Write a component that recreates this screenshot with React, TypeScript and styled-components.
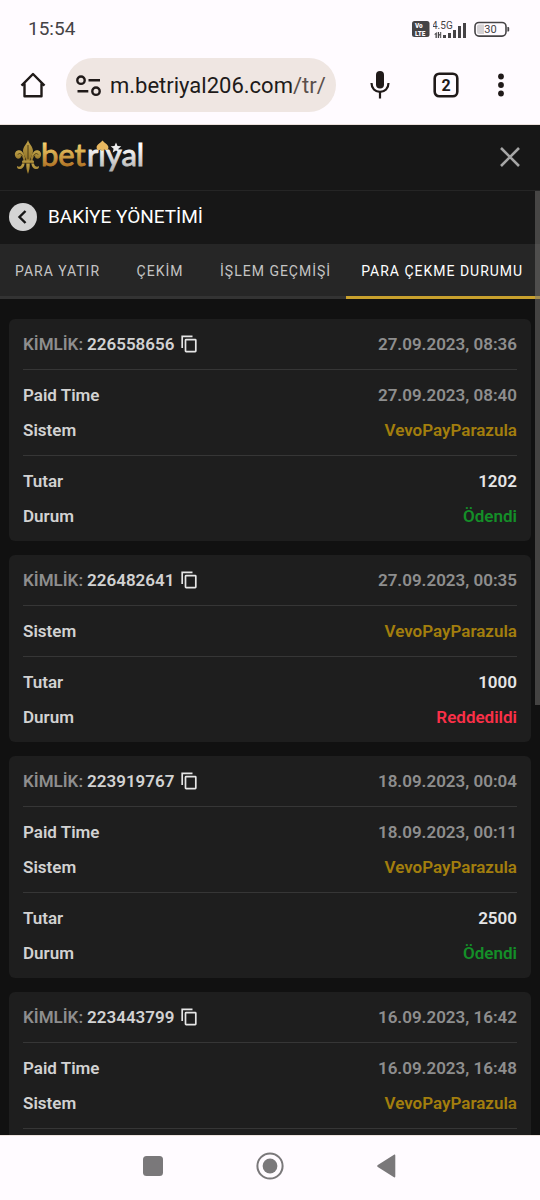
import React from "react";
import styled, { createGlobalStyle } from "styled-components";

const GlobalStyle = createGlobalStyle`
  *, *::before, *::after { box-sizing: border-box; }
  body {
    margin: 0;
    background: #111111;
    font-family: Roboto, "Liberation Sans", sans-serif;
  }
  button { font: inherit; color: inherit; border: 0; padding: 0; background: none; cursor: pointer; }
  svg { display: block; flex: none; }
`;

const Screen = styled.div`
  display: flex;
  flex-direction: column;
  height: 100vh;
  overflow: hidden;
`;

/* ---------- phone status bar ---------- */

const StatusBar = styled.div`
  display: flex;
  align-items: center;
  justify-content: space-between;
  flex: none;
  height: 58px;
  padding: 0 30px 0 28px;
  background: #fffbff;
  color: #454345;
`;

const Clock = styled.time`
  font-size: 19px;
  line-height: 24px;
`;

const StatusIcons = styled.div`
  display: flex;
  align-items: center;
  gap: 3px;
`;

/* ---------- browser toolbar ---------- */

const Toolbar = styled.div`
  display: flex;
  align-items: flex-start;
  flex: none;
  height: 67px;
  padding-right: 17px;
  background: #fffbff;
  border-bottom: 1px solid #ebe0dc;
  color: #201a19;
`;

const ToolButton = styled.button<{ $width: number }>`
  display: flex;
  align-items: center;
  justify-content: center;
  flex: none;
  width: ${(p) => p.$width}px;
  height: 54px;
`;

const AddressBar = styled.button`
  display: flex;
  align-items: center;
  gap: 8px;
  flex: 1;
  min-width: 0;
  height: 54px;
  margin-right: 11px;
  padding: 2px 8px 0 10px;
  overflow: hidden;
  border-radius: 27px;
  background: #efe6e2;
  white-space: nowrap;
`;

const Url = styled.span`
  font-size: 22px;
  line-height: 28px;
`;

const UrlPath = styled.span`
  color: #5b504c;
`;

/* ---------- site ---------- */

const SiteHeader = styled.header`
  display: flex;
  align-items: center;
  justify-content: space-between;
  flex: none;
  height: 66px;
  padding: 0 16px 2px 14px;
  background: #171717;
  border-bottom: 1px solid #252525;
`;

const HomeLink = styled.a`
  display: block;
`;

const CloseButton = styled.button`
  color: #a6a6a6;
`;

const Viewport = styled.div`
  position: relative;
  flex: 1;
  min-height: 0;
`;

const ScrollArea = styled.main`
  height: 100%;
  overflow-y: auto;
  scrollbar-width: none;
  background: #111111;
`;

const ScrollThumb = styled.div`
  position: absolute;
  top: 0;
  right: 0;
  width: 5px;
  height: 54.5%;
  background: rgba(120, 118, 116, 0.5);
`;

const TitleBar = styled.div`
  display: flex;
  align-items: center;
  gap: 11px;
  height: 53px;
  padding: 0 9px 2px;
  background: #171717;
`;

const BackButton = styled.button`
  display: flex;
  align-items: center;
  justify-content: center;
  width: 28px;
  height: 28px;
  border-radius: 50%;
  background: #d4d4d4;
  color: #171717;
`;

const Title = styled.h1`
  margin: 0;
  font-size: 19px;
  font-weight: 400;
  line-height: 24px;
  color: #ffffff;
`;

const Tabs = styled.nav`
  display: flex;
  height: 55px;
  background: #262626;
`;

const Tab = styled.button<{ $active?: boolean }>`
  flex: none;
  min-width: 90px;
  padding: 2px 15px 0;
  border-bottom: 3px solid ${(p) => (p.$active ? "#c9a12d" : "#333333")};
  color: ${(p) => (p.$active ? "#ffffff" : "#c4c4c4")};
  font-size: 14px;
  line-height: 20px;
  letter-spacing: 1px;
  white-space: nowrap;

  &:last-child { flex: 1 0 auto; text-align: left; }
`;

const CardList = styled.div`
  display: flex;
  flex-direction: column;
  gap: 14px;
  padding: 20px 9px;
`;

const Card = styled.article`
  padding: 0 14px;
  border-radius: 6px;
  background: #1e1e1e;
  font-size: 17px;
  font-weight: 600;
  line-height: 22px;
  color: #d2d2d2;
`;

const Section = styled.div`
  display: flex;
  flex-direction: column;
  gap: 13px;
  padding: 14px 0;

  & + & { border-top: 1px solid #363636; }
`;

const Row = styled.div`
  display: flex;
  align-items: center;
  justify-content: space-between;
  height: 22px;
`;

const Identity = styled.div`
  display: flex;
  align-items: center;
  gap: 4px;
`;

const Muted = styled.span`
  color: #8e8e8e;
`;

const CopyButton = styled.button`
  margin-left: 3px;
  color: #e6e6e6;
`;

type Tone = "muted" | "gold" | "plain" | "paid" | "rejected";

const toneColor: Record<Tone, string> = {
  muted: "#8e8e8e",
  gold: "#a37e0d",
  plain: "#e6e6e6",
  paid: "#148f28",
  rejected: "#fb3048",
};

const Value = styled.span<{ $tone: Tone }>`
  color: ${(p) => toneColor[p.$tone]};
`;

/* ---------- phone navigation ---------- */

const NavBar = styled.div`
  display: flex;
  justify-content: center;
  flex: none;
  height: 65px;
  padding-bottom: 4px;
  border-top: 1px solid #eee4e0;
  background: #fffbff;
  color: #7a787a;
`;

const NavButton = styled.button`
  display: flex;
  align-items: center;
  justify-content: center;
  width: 117px;
`;

/* ---------- drawings ---------- */

const VolteIcon = () => (
  <svg width="18" height="16" viewBox="0 0 18 16" aria-label="VoLTE">
    <rect width="17.5" height="16" rx="2.5" fill="#454345" />
    <text x="3" y="7" fontSize="6.4" fontWeight="900" fill="#fffbff">Vo</text>
    <text x="3" y="14.6" fontSize="6.4" fontWeight="900" fill="#fffbff">LTE</text>
  </svg>
);

const SignalIcon = () => (
  <svg width="38" height="19" viewBox="0 -2 38 19" aria-label="4.5G">
    <text x="-1" y="7" fontSize="10" fill="#454345">4.5G</text>
    <g fill="#454345">
      <path d="M3.8 10v6H2.500v-3.500H1zM4.800 10h1.300v2.200h1.500L6.100 14v2H4.800zM8.200 10h-1v6h1z" />
      <rect x="10" y="13" width="3" height="3" />
      <rect x="15" y="11" width="3" height="5" />
      <rect x="20" y="8" width="3" height="8" />
      <rect x="25" y="4" width="3" height="12" />
      <rect x="30" y="1" width="3" height="15" />
    </g>
  </svg>
);

const BatteryIcon = () => (
  <svg width="36" height="16" viewBox="0 0 36 16" aria-label="30%">
    <rect x="1" y="1.500" width="31" height="13.600" rx="4" fill="none" stroke="#454345" strokeWidth="1.600" />
    <path d="M5 3.500h5v9.600H5a2 2 0 0 1-2-2v-5.600a2 2 0 0 1 2-2z" fill="#d6d3d6" />
    <path d="M33.400 6h.8a1 1 0 0 1 1 1v2.600a1 1 0 0 1-1 1h-.8z" fill="#454345" />
    <text x="16.500" y="12.300" fontSize="11" textAnchor="middle" fill="#454345">30</text>
  </svg>
);

const HomeIcon = () => (
  <svg width="26" height="26" viewBox="0 0 26 26" fill="none" stroke="currentColor" strokeWidth="2.400" strokeLinejoin="round">
    <path d="M1.500 13.600 13 2l11.500 11.600M4.500 11.500V24.300h17V11.500" />
  </svg>
);

const SiteSettingsIcon = () => (
  <svg width="26" height="22" viewBox="0 0 26 22" fill="none" stroke="currentColor" strokeWidth="2.400">
    <circle cx="5" cy="5.200" r="3.700" />
    <path d="M12.500 5.200h11.500M1.500 16.200h10.800" />
    <circle cx="20" cy="16.200" r="3.700" />
  </svg>
);

const MicIcon = () => (
  <svg width="20" height="30" viewBox="0 0 20 30">
    <rect x="6" y="1" width="8" height="17.500" rx="4" fill="currentColor" />
    <path d="M1.500 13c0 5.400 3.700 8.800 8.500 8.800s8.500-3.400 8.500-8.800M10 21.800v6.700" fill="none" stroke="currentColor" strokeWidth="2.200" />
  </svg>
);

const TabCountIcon = () => (
  <svg width="26" height="26" viewBox="0 0 26 26">
    <rect x="1.700" y="1.700" width="22.600" height="22.600" rx="4.500" fill="none" stroke="currentColor" strokeWidth="2.600" />
    <text x="13" y="18.600" fontSize="16" fontWeight="700" textAnchor="middle" fill="currentColor">2</text>
  </svg>
);

const MenuIcon = () => (
  <svg width="8" height="24" viewBox="0 0 8 24" fill="currentColor">
    <circle cx="4" cy="3.500" r="2.900" />
    <circle cx="4" cy="12" r="2.900" />
    <circle cx="4" cy="20.500" r="2.900" />
  </svg>
);

const Logo = () => (
  <svg width="132" height="46" viewBox="0 -4 132 46" role="img" aria-label="betriyal">
    <defs>
      <linearGradient id="gold" x1="0" y1="0" x2="0" y2="1">
        <stop offset="0.2" stopColor="#f3d56f" />
        <stop offset="0.9" stopColor="#a9691d" />
      </linearGradient>
      <linearGradient id="silver" x1="0" y1="0" x2="0" y2="1">
        <stop offset="0.3" stopColor="#ffffff" />
        <stop offset="1" stopColor="#a9a9a9" />
      </linearGradient>
      <linearGradient id="brass" x1="0" y1="0" x2="0" y2="1">
        <stop offset="0" stopColor="#c2a44a" />
        <stop offset="1" stopColor="#8f7025" />
      </linearGradient>
    </defs>
    <g fill="url(#brass)">
      <path d="M14 2c-1 4-5 6.500-5 11 0 3.500 2.600 6 3.400 10h3.200c.8-4 3.400-6.500 3.400-10 0-4.500-4-7-5-11z" />
      <path d="M11.500 23c-.3-5-2.500-10.500-6.400-10.700C2.200 12.200.6 14.600.9 17c.3 2.400 2.300 4 4.300 3.600 1.500-.3 2.200-1.800 1.500-3 2 1 2.700 3 2.700 5.400z" />
      <path d="M16.500 23c.3-5 2.500-10.500 6.400-10.700 2.900-.1 4.500 2.300 4.200 4.700-.3 2.400-2.300 4-4.300 3.600-1.500-.3-2.200-1.800-1.500-3-2 1-2.700 3-2.700 5.400z" />
      <rect x="8" y="22.600" width="12" height="2.600" rx="1.200" />
      <path d="M12.300 25.500h3.400c.2 3.500-.3 7-1.700 10.500-1.400-3.500-1.900-7-1.700-10.500zM10.600 25.500c-.3 3.500-2.400 5.800-5.400 5.600-1.700-.1-2.600-1.600-1.900-3 1.500 1.300 4.200.4 4.700-2.600zM17.400 25.500c.3 3.500 2.400 5.800 5.400 5.600 1.700-.1 2.600-1.600 1.900-3-1.500 1.300-4.200.4-4.700-2.600z" />
    </g>
    <path d="M14 7v14M4 16.500c1-1.800 3.500-1 4.600 2M24 16.500c-1-1.800-3.500-1-4.600 2" fill="none" stroke="#4c3c14" strokeWidth="1" />
    <text y="28" fontFamily="Lato, sans-serif" fontSize="31">
      <tspan x="27" fill="url(#gold)" stroke="url(#gold)" strokeWidth="0.900">bet</tspan>
      <tspan x="73" fill="url(#silver)" stroke="url(#silver)" strokeWidth="0.900">riyal</tspan>
    </text>
    <path d="M88.500 2.500c1.700 2.300 5.900 4 5.900 6.900 0 2.800-3.100 3.200-4.900 1.700l.8 1.700h-3.600l.8-1.700c-1.800 1.500-4.900 1.100-4.900-1.700 0-2.900 4.200-4.600 5.900-6.900z" fill="#e8b860" />
    <path d="m102 4.500 1.500 3.500 3.800.3-2.900 2.500.9 3.700-3.300-2-3.300 2 .9-3.700-2.900-2.500 3.800-.3z" fill="#eeeeee" />
  </svg>
);

const CloseIcon = () => (
  <svg width="28" height="28" viewBox="0 0 28 28" fill="none" stroke="currentColor" strokeWidth="2.600">
    <path d="m5 5 18 18M23 5 5 23" />
  </svg>
);

const ChevronLeftIcon = () => (
  <svg width="14" height="16" viewBox="0 0 14 16" fill="none" stroke="currentColor" strokeWidth="2.400">
    <path d="M9.500 2 3.500 8l6 6" />
  </svg>
);

const CopyIcon = () => (
  <svg width="16" height="18" viewBox="0 0 16 18" fill="none" stroke="currentColor" strokeWidth="1.700">
    <path d="M1.200 13V1.300h10.300" />
    <rect x="4.500" y="4.600" width="10.300" height="12" rx="0.600" />
  </svg>
);

const RecentsIcon = () => (
  <svg width="20" height="20" viewBox="0 0 20 20" fill="currentColor">
    <rect width="20" height="20" rx="3.500" />
  </svg>
);

const CircleIcon = () => (
  <svg width="28" height="28" viewBox="0 0 28 28">
    <circle cx="14" cy="14" r="12.600" fill="none" stroke="currentColor" strokeWidth="2" />
    <circle cx="14" cy="14" r="7.400" fill="currentColor" />
  </svg>
);

const BackIcon = () => (
  <svg width="20" height="24" viewBox="0 0 20 24" fill="currentColor">
    <path d="M17 .8c.8-.5 1.300-.2 1.300.6v21.200c0 .8-.5 1.100-1.300.6L.8 12.900c-.8-.5-.8-1.300 0-1.800z" />
  </svg>
);

/* ---------- data ---------- */

type Line = { label: string; value: string; tone: Tone };
type Withdrawal = { id: string; date: string; sections: Line[][] };

const system: Line = { label: "Sistem", value: "VevoPayParazula", tone: "gold" };
const paidAt = (value: string): Line => ({ label: "Paid Time", value, tone: "muted" });
const amount = (value: string): Line => ({ label: "Tutar", value, tone: "plain" });
const paid: Line = { label: "Durum", value: "Ödendi", tone: "paid" };
const rejected: Line = { label: "Durum", value: "Reddedildi", tone: "rejected" };

const withdrawals: Withdrawal[] = [
  { id: "226558656", date: "27.09.2023, 08:36", sections: [[paidAt("27.09.2023, 08:40"), system], [amount("1202"), paid]] },
  { id: "226482641", date: "27.09.2023, 00:35", sections: [[system], [amount("1000"), rejected]] },
  { id: "223919767", date: "18.09.2023, 00:04", sections: [[paidAt("18.09.2023, 00:11"), system], [amount("2500"), paid]] },
  { id: "223443799", date: "16.09.2023, 16:42", sections: [[paidAt("16.09.2023, 16:48"), system], []] },
];

const tabs = ["PARA YATIR", "ÇEKİM", "İŞLEM GEÇMİŞİ", "PARA ÇEKME DURUMU"];

const WithdrawalCard = ({ id, date, sections }: Withdrawal) => (
  <Card>
    <Section>
      <Row>
        <Identity>
          <Muted>KİMLİK:</Muted>
          <span>{id}</span>
          <CopyButton aria-label="Kopyala"><CopyIcon /></CopyButton>
        </Identity>
        <Value $tone="muted">{date}</Value>
      </Row>
    </Section>
    {sections.map((lines, index) => (
      <Section key={index}>
        {lines.map((line) => (
          <Row key={line.label}>
            <span>{line.label}</span>
            <Value $tone={line.tone}>{line.value}</Value>
          </Row>
        ))}
      </Section>
    ))}
  </Card>
);

export default function App() {
  return (
    <Screen>
      <GlobalStyle />
      <StatusBar>
        <Clock>15:54</Clock>
        <StatusIcons>
          <VolteIcon />
          <SignalIcon />
          <BatteryIcon />
        </StatusIcons>
      </StatusBar>
      <Toolbar>
        <ToolButton $width={66} aria-label="Home"><HomeIcon /></ToolButton>
        <AddressBar>
          <SiteSettingsIcon />
          <Url>m.betriyal206.com<UrlPath>/tr/</UrlPath></Url>
        </AddressBar>
        <ToolButton $width={66} aria-label="Voice search"><MicIcon /></ToolButton>
        <ToolButton $width={66} aria-label="Tabs"><TabCountIcon /></ToolButton>
        <ToolButton $width={44} aria-label="Menu"><MenuIcon /></ToolButton>
      </Toolbar>
      <SiteHeader>
        <HomeLink href="#"><Logo /></HomeLink>
        <CloseButton aria-label="Kapat"><CloseIcon /></CloseButton>
      </SiteHeader>
      <Viewport>
        <ScrollArea>
          <TitleBar>
            <BackButton aria-label="Geri"><ChevronLeftIcon /></BackButton>
            <Title>BAKİYE YÖNETİMİ</Title>
          </TitleBar>
          <Tabs>
            {tabs.map((name, index) => (
              <Tab key={name} $active={index === tabs.length - 1}>{name}</Tab>
            ))}
          </Tabs>
          <CardList>
            {withdrawals.map((item) => (
              <WithdrawalCard key={item.id} {...item} />
            ))}
          </CardList>
        </ScrollArea>
        <ScrollThumb />
      </Viewport>
      <NavBar>
        <NavButton aria-label="Recents"><RecentsIcon /></NavButton>
        <NavButton aria-label="Home screen"><CircleIcon /></NavButton>
        <NavButton aria-label="Back"><BackIcon /></NavButton>
      </NavBar>
    </Screen>
  );
}
